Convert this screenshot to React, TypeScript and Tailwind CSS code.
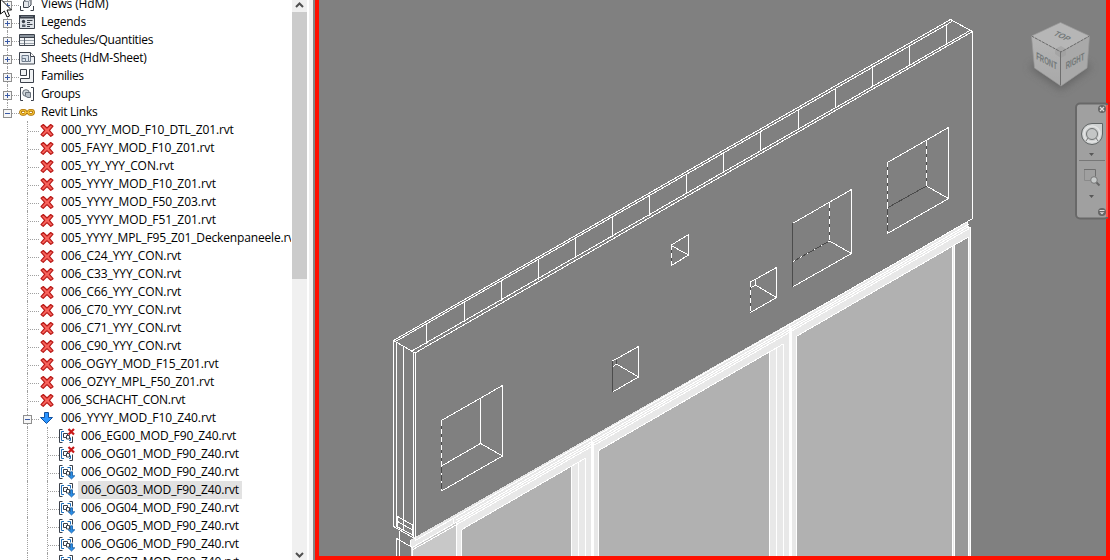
import React from "react";

type Kind = "views" | "legends" | "schedules" | "sheets" | "families" | "groups" | "links" | "missing" | "loaded" | "childMissing" | "childLoaded";
type Item = { label: string; icon: Kind; level: 0 | 1 | 2; box?: "plus" | "minus"; selected?: boolean; tracking?: string };

const items: Item[] = [
  { label: "Views (HdM)", icon: "views", level: 0, box: "plus", tracking: "tracking-[-0.15px]" },
  { label: "Legends", icon: "legends", level: 0, box: "plus" },
  { label: "Schedules/Quantities", icon: "schedules", level: 0, box: "plus", tracking: "tracking-[-0.34px]" },
  { label: "Sheets (HdM-Sheet)", icon: "sheets", level: 0, box: "plus" },
  { label: "Families", icon: "families", level: 0, box: "plus", tracking: "tracking-[-0.35px]" },
  { label: "Groups", icon: "groups", level: 0, box: "plus", tracking: "tracking-[-0.38px]" },
  { label: "Revit Links", icon: "links", level: 0, box: "minus" },
  { label: "000_YYY_MOD_F10_DTL_Z01.rvt", icon: "missing", level: 1 },
  { label: "005_FAYY_MOD_F10_Z01.rvt", icon: "missing", level: 1 },
  { label: "005_YY_YYY_CON.rvt", icon: "missing", level: 1, tracking: "tracking-[-0.07px]" },
  { label: "005_YYYY_MOD_F10_Z01.rvt", icon: "missing", level: 1, tracking: "tracking-[-0.05px]" },
  { label: "005_YYYY_MOD_F50_Z03.rvt", icon: "missing", level: 1, tracking: "tracking-[-0.05px]" },
  { label: "005_YYYY_MOD_F51_Z01.rvt", icon: "missing", level: 1, tracking: "tracking-[-0.05px]" },
  { label: "005_YYYY_MPL_F95_Z01_Deckenpaneele.rvt", icon: "missing", level: 1, tracking: "tracking-[-0.15px]" },
  { label: "006_C24_YYY_CON.rvt", icon: "missing", level: 1, tracking: "tracking-[-0.09px]" },
  { label: "006_C33_YYY_CON.rvt", icon: "missing", level: 1, tracking: "tracking-[-0.09px]" },
  { label: "006_C66_YYY_CON.rvt", icon: "missing", level: 1, tracking: "tracking-[-0.09px]" },
  { label: "006_C70_YYY_CON.rvt", icon: "missing", level: 1, tracking: "tracking-[-0.09px]" },
  { label: "006_C71_YYY_CON.rvt", icon: "missing", level: 1, tracking: "tracking-[-0.09px]" },
  { label: "006_C90_YYY_CON.rvt", icon: "missing", level: 1, tracking: "tracking-[-0.09px]" },
  { label: "006_OGYY_MOD_F15_Z01.rvt", icon: "missing", level: 1 },
  { label: "006_OZYY_MPL_F50_Z01.rvt", icon: "missing", level: 1, tracking: "tracking-[-0.05px]" },
  { label: "006_SCHACHT_CON.rvt", icon: "missing", level: 1, tracking: "tracking-[-0.25px]" },
  { label: "006_YYYY_MOD_F10_Z40.rvt", icon: "loaded", level: 1, box: "minus", tracking: "tracking-[-0.05px]" },
  { label: "006_EG00_MOD_F90_Z40.rvt", icon: "childMissing", level: 2 },
  { label: "006_OG01_MOD_F90_Z40.rvt", icon: "childMissing", level: 2 },
  { label: "006_OG02_MOD_F90_Z40.rvt", icon: "childLoaded", level: 2 },
  { label: "006_OG03_MOD_F90_Z40.rvt", icon: "childLoaded", level: 2, selected: true },
  { label: "006_OG04_MOD_F90_Z40.rvt", icon: "childLoaded", level: 2 },
  { label: "006_OG05_MOD_F90_Z40.rvt", icon: "childLoaded", level: 2 },
  { label: "006_OG06_MOD_F90_Z40.rvt", icon: "childLoaded", level: 2 },
  { label: "006_OG07_MOD_F90_Z40.rvt", icon: "childLoaded", level: 2 },
];

function TreeIcon({ kind }: { kind: Kind }) {
  const dark = "#3b414b";
  return (
    <svg width="16" height="16" viewBox="0 0 16 16" fill="none" className="shrink-0 overflow-visible">
      {kind === "views" && (
        <g stroke={dark}>
          <path d="M1.500 10v4.500h3M14.500 10v4.500h-3" />
          <path d="M4.500 5.500l3-2.500h4.500v6l-2.500 2.500h-5z" fill="#e4e7eb" />
          <path d="M4.500 5.500h5v6M9.500 5.500l2.500-2" stroke="#88909a" />
        </g>
      )}
      {kind === "legends" && (
        <g>
          <path d="M.5 1.500h15v13H.5z" fill="#dfe3e8" stroke={dark} />
          <path d="M0 1h16v3.500H0z" fill={dark} />
          <path d="M2 2.500h12" stroke="#717984" />
          <circle cx="4.500" cy="7.500" r="1.700" fill={dark} />
          <path d="M3 10.500h3.500v2.500H3z" fill="#59616c" />
          <path d="M8 6.500h5.500M8 8.500h3M8 10.500h5.500M8 12.500h3" stroke={dark} />
        </g>
      )}
      {kind === "schedules" && (
        <g>
          <path d="M.5 2.500h15v11H.5z" fill="#f2f4f6" />
          <path d="M1 3h14v2.500H1z" fill="#8b949e" />
          <path d="M1 8.500h14M1 11.500h14" stroke="#9aa2ab" />
          <path d="M5.500 5.500v8" stroke="#59616c" />
          <path d="M.5 2.500h15v11H.5zM.5 5.500h15" stroke={dark} />
        </g>
      )}
      {kind === "sheets" && (
        <g stroke={dark}>
          <path d="M.5 2.500h11l4 4v7.500H.5z" fill="#eef1f5" />
          <path d="M11.500 2.500v4h4" fill="#fff" />
          <path d="M3 5.500h6.500v6H6.500v-3H3zM6.500 8.500H3v3h3.500M11.500 7v4.500h-2" stroke="#6d7a8a" fill="#dce4ed" />
        </g>
      )}
      {kind === "families" && (
        <g stroke={dark} fill="#f0f2f4">
          <path d="M1.500 1.500h6v6h-6z" />
          <path d="M10.500 1.500h4v13h-13v-4h9z" />
        </g>
      )}
      {kind === "groups" && (
        <g stroke={dark}>
          <path d="M4 1.500H1.500v13H4M12 1.500h2.500v13H12" />
          <circle cx="7" cy="7" r="3.300" fill="#d5dade" stroke="#68717b" />
          <path d="M6.500 6.500h5v5H9a3 3 0 0 1-2.500-2z" fill="#b8c0c8" stroke="#68717b" />
        </g>
      )}
      {kind === "links" && (
        <g stroke="#ad7200" strokeWidth="2.800">
          <rect x="1.500" y="6.300" width="5.300" height="4" rx="2" />
          <rect x="9.200" y="6.300" width="5.300" height="4" rx="2" />
          <path d="M5 8.300h6" />
          <g stroke="#f5c33d" strokeWidth="1.100">
            <rect x="1.500" y="6.300" width="5.300" height="4" rx="2" />
            <rect x="9.200" y="6.300" width="5.300" height="4" rx="2" />
            <path d="M5 8.300h6" />
          </g>
        </g>
      )}
      {kind === "missing" && (
        <path d="M4.300 2.500L8 6l3.700-3.500 2.300 1.700L10.400 8.300 14 12.700l-2.200 1.700L8 10.600l-3.800 3.800L2 12.600l3.700-4.300L2 4.200z" fill="#f7625b" stroke="#b81816" strokeWidth="1.200" strokeLinejoin="round" />
      )}
      {kind === "loaded" && <path d="M5.500 2.500h4v5h4L7.500 13.500 1.500 7.500h4z" fill="#2a94ff" stroke="#11519f" strokeLinejoin="round" />}
      {(kind === "childMissing" || kind === "childLoaded") && (
        <g>
          <path d="M3.500 1.500h-3v13h3" stroke={dark} />
          <path d="M5 3.500H2.500v9H5" stroke="#1d6fbb" />
          <path d="M4.500 5.500h4v4h-4z" stroke={dark} />
          <path d="M7.500 7.500h3v3.500h-3z" fill="#fff" stroke={dark} />
          {kind === "childMissing" ? (
            <g>
              <path d="M10 12.500h1.500v-3" stroke="#1d6fbb" />
              <path d="M13.500 8.500v6h-3" stroke={dark} />
              <path d="M9.500 1l5.500 5.500M15 1L9.500 6.500" stroke="#c71818" strokeWidth="2.200" />
            </g>
          ) : (
            <g>
              <path d="M8.500 3.500h3v3" stroke="#1d6fbb" />
              <path d="M10.500 1.500h3v5" stroke={dark} />
              <path d="M11.500 7.800h2v4h2.300l-3.300 3.200-3.300-3.200h2.300z" fill="#2a8fe8" stroke="#10579d" strokeWidth=".8" />
            </g>
          )}
        </g>
      )}
    </svg>
  );
}

function Expander({ type }: { type: "plus" | "minus" }) {
  return (
    <svg width="9" height="9" viewBox="0 0 9 9" shapeRendering="crispEdges" className="shrink-0">
      <path d="M.5.5h8v8h-8z" fill="#f6f6f6" stroke="#8f8f8f" />
      <path d="M2 4.500h5" stroke="#3b5aa5" />
      {type === "plus" && <path d="M4.500 2v5" stroke="#3b5aa5" />}
    </svg>
  );
}

const levelPad = ["pl-[3px]", "pl-[23px]", "pl-[43px]"];

function Row({ item, last }: { item: Item; last: boolean }) {
  const tracking = item.tracking ?? (item.level === 0 ? "tracking-[-0.25px]" : "tracking-[-0.13px]");
  return (
    <div className={`relative flex h-[18px] shrink-0 items-center ${levelPad[item.level]}`}>
      {item.level === 0 && <span className={`absolute left-[7px] top-0 border-l border-dotted border-[#a0a0a0] ${item.icon === "links" ? "h-[9px]" : "h-[18px]"}`} />}
      {item.level > 0 && <span className={`absolute left-[27px] top-0 border-l border-dotted border-[#a0a0a0] ${last ? "h-[9px]" : "h-[18px]"}`} />}
      {item.level === 2 && <span className="absolute left-[47px] top-0 h-[18px] border-l border-dotted border-[#a0a0a0]" />}
      <span className="relative flex w-[16px] shrink-0 items-center pt-[3px]">
        {item.box ? <Expander type={item.box} /> : <span className="w-[5px]" />}
        <span className="h-0 flex-1 border-t border-dotted border-[#a0a0a0]" />
      </span>
      <TreeIcon kind={item.icon} />
      <span className={`ml-[3px] h-[18px] whitespace-nowrap px-[3px] font-['Open_Sans','Noto_Sans',sans-serif] text-[12px] leading-[17px] text-black ${tracking} ${item.selected ? "bg-[#e2e2e2]" : ""}`}>
        {item.label}
      </span>
    </div>
  );
}

function Chevron({ up }: { up?: boolean }) {
  return (
    <svg width="9" height="6" viewBox="0 0 9 6" fill="none" className="shrink-0">
      <path d={up ? "M1 5l3.500-3.500L8 5" : "M1 1l3.500 3.500L8 1"} stroke="#505050" strokeWidth="2" />
    </svg>
  );
}

const ticks = [426, 464, 501, 538, 575, 612, 649, 686, 723, 760, 798, 835, 872, 909, 946];
const edge = (x: number) => 306.7 + (820 - x) * 0.5774;
const sill = (from: number, to: number, off: number) => `M${from} ${edge(from) + off}L${to} ${edge(to) + off}`;

function Model() {
  return (
    <svg width="787" height="556" viewBox="319 0 787 556" fill="none" stroke="#fff" shapeRendering="crispEdges" className="block">
      <g stroke="none">
        <path d="M411 539.500L967 222v6h3v330H411z" fill="#e8e8e8" />
        <path d="M413 548L456 523v35H413z" fill="#c8c8c8" />
        <path d="M462 529.500L571 466.500V558H462z" fill="#b1b1b1" />
        <path d="M599 450.500L769 352.500V558H599z" fill="#b1b1b1" />
        <path d="M797 336L952 246.500V558H797z" fill="#b1b1b1" />
        <path d="M955 245L968 237.500V558H955z" fill="#989898" />
      </g>
      <path d="M393.500 340.500L950.500 19.500L972.500 31.500L415 353L393.500 340.500M396.500 341L952 21.500M411 351.500L970 30.500" />
      {ticks.map((x) => (
        <path key={x} d={`M${x + 0.5} ${50.3 + (900 - x) * 0.577}V${70.7 + (900 - x) * 0.577}`} />
      ))}
      <path d="M393.500 341V526.500L415.500 539V353M396.500 343V527M403.500 346V530M413.500 352V538M972.500 32V218.500L967.500 221.500V227H970.500V558" />
      <path d="M397.500 516.500L412.500 525V535L397.500 527zM397.500 521.500L412.500 530M399.500 531V558M396.500 558V538.500L412.500 547.500V558M410.500 540V546" />
      <path d={sill(415, 967, 0)} />
      <path d={sill(456, 969, 3.300)} />
      <path d={sill(456, 969, 5.600)} />
      <path d={sill(456, 969, 8)} />
      <path d={sill(462, 585, 16)} />
      <path d={sill(599, 783, 16)} />
      <path d={sill(797, 968, 16)} />
      <path d="M413 547L456 522.500M413 549.500L456 525M453.500 519V523" />
      <path d="M456.500 522V558M461.500 530V558M571.500 466V558M578.500 462V558M585.500 458V558M598.500 451V558M769.500 352V558M776.500 348V558M783.500 344V558M796.500 336V558M952.500 247V558M954.500 245V558M968.500 237V558" />
      <path d="M592.500 442V558M790.500 328V558" strokeWidth="3" />
      <path d="M591.500 438V443M789.500 324V329" />
      <path d="M441.500 420.500L502.500 385.500V456L441.500 491M480.500 398V443.500L502.500 456M480.500 443.500L441.500 466" />
      <path d="M671.500 245L688.500 234.500V255L671.500 265.500M672 246L688.500 255" />
      <path d="M750.500 282L776.500 267.500V297.500L750.500 312.500M755.500 280V285L776.500 297.500M755.500 285L751 287.500" />
      <path d="M612.500 361L638.500 346.500V377L612.500 392M616.500 364L638.500 377M616.500 364L613 366.500" />
      <path d="M792.500 223.500L851.500 189.500V253.500L792.500 287M829.500 241L851.500 253.500" />
      <path d="M887.500 162.500L948.500 127.500V198.500L887.500 233.500M926.500 186L948.500 198.500" />
      <g stroke="#4c4c4c">
        <path d="M441.500 421V491M671.500 245V265M750.500 282V312M612.500 361V392M616.500 360V364M792.500 223V287M887.500 162V233M829.500 203V241M926.500 141V186M829.500 241L793 261.500M926.500 186L888 207.500" />
      </g>
      <path d="M441.500 421V465M671.500 245V265M750.500 282V312M829.500 203V241M887.500 162V207M926.500 141V186" strokeDasharray="5 3" />
      <path d="M887.500 207V233M441.500 465V491M829.500 241L793 261.500" strokeDasharray="2 6" />
    </svg>
  );
}

function ViewCube() {
  return (
    <svg width="80" height="90" viewBox="1020 15 80 90" className="block">
      <defs>
        <filter id="soft" x="-30%" y="-50%" width="160%" height="200%"><feGaussianBlur stdDeviation="4" /></filter>
        <linearGradient id="face" x1="0" y1="0" x2="0" y2="1"><stop stopColor="#b5b5b5" /><stop offset="1" stopColor="#a8a8a8" /></linearGradient>
      </defs>
      <path d="M1029 67L1060 52L1092 67L1061 90z" fill="#555" opacity=".65" filter="url(#soft)" />
      <path d="M1060.500 22.500L1089.500 36L1061 52L1031.500 36z" fill="#b6b6b6" />
      <path d="M1031.500 36L1061 52V86L1034.500 68z" fill="url(#face)" />
      <path d="M1089.500 36L1061 52V86L1087 68z" fill="#a9a9a9" />
      <path d="M1055 49L1061 46L1066 49V55L1061 58L1055 54z" fill="#9e9e9e" opacity=".6" />
      <path d="M1031.500 36L1061 52L1089.500 36" fill="none" stroke="#6a6a6a" strokeDasharray="3 1" />
      <path d="M1060.500 52V86" fill="none" stroke="#6e6e6e" />
      <path d="M1031.500 36L1060.500 22.500L1089.500 36L1087 68L1061 86L1034.500 68z" fill="none" stroke="#999" strokeWidth=".7" />
      <g fill="#727878" fontFamily="Liberation Sans, sans-serif" fontSize="9" fontWeight="bold" textAnchor="middle">
        <text transform="matrix(.78 .36 -.75 .6 1060 38)">TOP</text>
        <text transform="matrix(.67 .36 0 1.15 1046.500 64.500)">FRONT</text>
        <text transform="matrix(.67 -.36 0 1.15 1075 64.500)">RIGHT</text>
      </g>
    </svg>
  );
}

function NavigationBar() {
  return (
    <svg width="35" height="118" viewBox="1075 102 35 118" fill="none" className="block">
      <rect x="1076" y="103.500" width="32.500" height="115" rx="4" fill="#a0a0a0" stroke="#686868" strokeWidth="2" />
      <path d="M1106 105h2v112h-2z" fill="#ff5145" />
      <path d="M1108 102h2v118h-2z" fill="#e51010" />
      <circle cx="1102" cy="109" r="4" fill="#666" />
      <path d="M1100 107l4 4m0-4l-4 4" stroke="#ddd" strokeWidth="1.300" />
      <path d="M1092 123.500h10.500v10.500a10.500 10.500 0 1 1-10.500-10.500z" fill="#d0d2d2" stroke="#606464" />
      <circle cx="1092" cy="134" r="8" stroke="#e3e4e4" strokeWidth="1.500" />
      <circle cx="1092" cy="134" r="5.500" fill="#c4c6c6" stroke="#717474" />
      <path d="M1086 141l2-3M1098 141l-2-3" stroke="#777" />
      <path d="M1089 153h5l-2.500 3zM1089 195h5l-2.500 3z" fill="#585858" />
      <path d="M1079 160.500h26" stroke="#777" />
      <path d="M1084 169.500h11.500v7" stroke="#6f6f6f" />
      <path d="M1084.500 170v10.500h6" stroke="#8a8a8a" />
      <circle cx="1094" cy="180" r="3.300" fill="#c7caca" stroke="#777" />
      <path d="M1096.500 182.500l3 3" stroke="#666" strokeWidth="2" />
      <circle cx="1102" cy="212" r="4" fill="#666" />
      <path d="M1099.500 210.500h5" stroke="#ddd" />
      <path d="M1099.700 212.200h4.600l-2.300 2.300z" fill="#ddd" />
    </svg>
  );
}

export default function App() {
  return (
    <div className="relative flex h-[560px] w-[1110px] overflow-hidden bg-[#808080]">
      <aside className="flex h-full w-[315px] shrink-0 bg-[#f0f0f0]">
        <div className="flex h-full w-[292px] shrink-0 flex-col overflow-hidden bg-white">
          <div className="-mt-[5px] flex w-[291px] flex-col overflow-hidden">
            {items.map((item, i) => <Row key={item.label} item={item} last={i === items.length - 1} />)}
          </div>
        </div>
        <div className="flex h-full w-[15px] shrink-0 flex-col items-center bg-[#f0f0f0]">
          <div className="flex h-[12px] shrink-0 items-center pb-[2px]"><Chevron up /></div>
          <div className="h-[267px] w-full shrink-0 bg-[#cbcbcb]" />
          <div className="flex flex-1 items-end pb-[2px]"><Chevron /></div>
        </div>
        <div className="h-full w-[2px] bg-white" />
        <div className="h-full w-[4px] bg-[#f0f0f0]" />
        <div className="h-full w-[2px] bg-[#858585]" />
      </aside>
      <main className="h-full w-[795px] border-b-4 border-l-4 border-r-4 border-[#ff1000] bg-[#808080]">
        <Model />
      </main>
      <div className="absolute left-[1020px] top-[15px]"><ViewCube /></div>
      <div className="absolute left-[1075px] top-[102px]"><NavigationBar /></div>
      <svg width="14" height="22" viewBox="0 0 14 22" className="absolute left-0 top-[-2px]">
        <path d="M.5 1L11.500 12H7l2.500 6-2.500 1-2.600-6L.5 16z" fill="#fff" stroke="#111" />
      </svg>
    </div>
  );
}
